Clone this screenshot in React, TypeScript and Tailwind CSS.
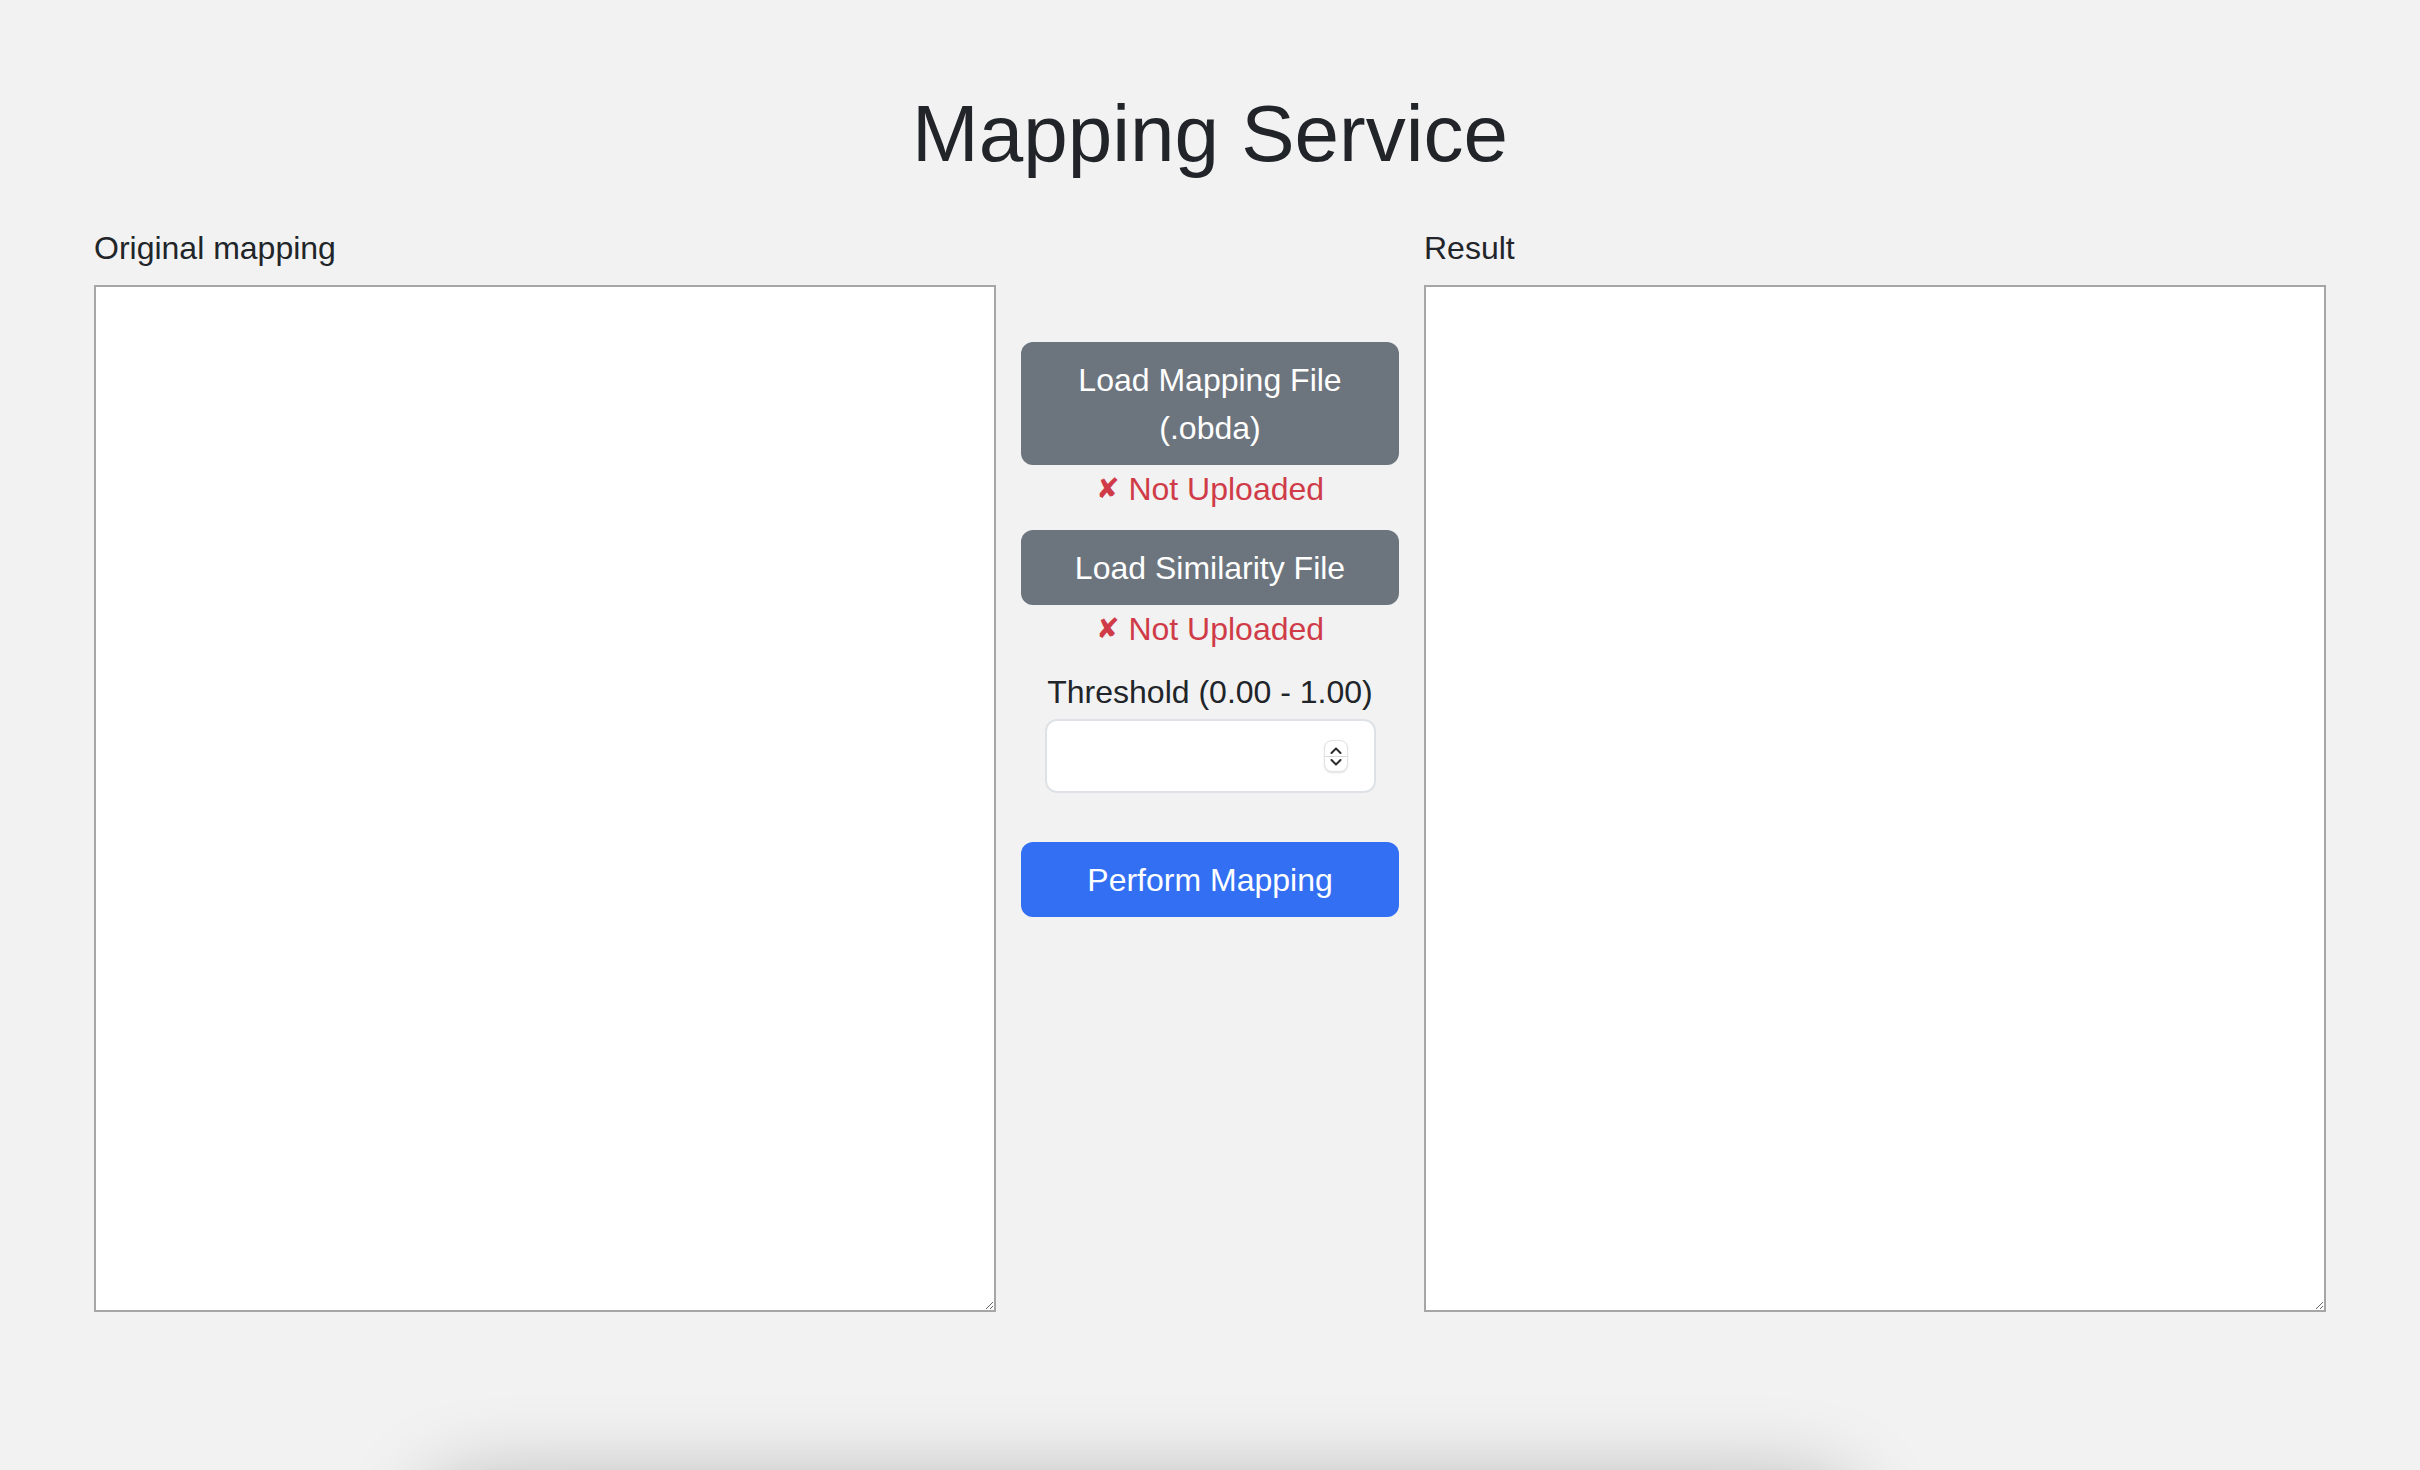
import { useState } from "react";

function Spinner() {
  return (
    <div className="pointer-events-none absolute right-[28px] top-[21px] flex h-[32px] w-[24px] flex-col items-center justify-center rounded-[8px] border border-[#e3e3e3] bg-white shadow-[0_1px_2px_rgba(0,0,0,0.12)]">
      <svg width="14" height="9" viewBox="0 0 14 9" fill="none">
        <path d="M2.5 7L7 2.5L11.5 7" stroke="#2b2b2b" strokeWidth="2" strokeLinecap="round" strokeLinejoin="round" />
      </svg>
      <div className="my-[1px] h-px w-full bg-[#d8d8d8]" />
      <svg width="14" height="9" viewBox="0 0 14 9" fill="none">
        <path d="M2.5 2L7 6.5L11.5 2" stroke="#2b2b2b" strokeWidth="2" strokeLinecap="round" strokeLinejoin="round" />
      </svg>
    </div>
  );
}

function Status() {
  return (
    <div className="flex h-[48px] items-center justify-center gap-[9px] text-[32px] leading-none text-[#d03b48]">
      <span className="font-['DejaVu_Sans',sans-serif] text-[28px] leading-none">✘</span>
      <span>Not Uploaded</span>
    </div>
  );
}

export default function App() {
  const [threshold, setThreshold] = useState("");

  return (
    <div className="h-[1470px] overflow-hidden bg-[#f2f2f2] font-['Liberation_Sans',Arial,sans-serif] text-[#212529]">
      <h1 className="pt-[86px] text-center text-[80px] font-normal leading-[1.2]">
        Mapping Service
      </h1>

      <div className="mt-[42px] flex px-[94px]">
        <div className="flex w-[902px] flex-col">
          <label className="text-[32px] leading-[48px]">Original mapping</label>
          <textarea className="mt-[13px] h-[1027px] w-full border-2 border-[#a6a6a6] bg-white outline-none" />
        </div>

        <div className="flex flex-1 flex-col items-center px-[25px] pt-[118px]">
          <button className="flex h-[123px] w-full items-center justify-center rounded-[12px] bg-[#6c757e] px-[24px] text-[32px] leading-[48px] text-white">
            Load Mapping File (.obda)
          </button>
          <Status />
          <button className="mt-[17px] flex h-[75px] w-full items-center justify-center rounded-[12px] bg-[#6c757e] px-[24px] text-[32px] leading-[48px] text-white">
            Load Similarity File
          </button>
          <Status />

          <label className="mt-[15px] h-[48px] text-center text-[32px] leading-[48px]">
            Threshold (0.00 - 1.00)
          </label>
          <div className="relative mt-[3px] w-[331px]">
            <input
              type="text"
              value={threshold}
              onChange={(e) => setThreshold(e.target.value)}
              className="h-[74px] w-full rounded-[12px] border-2 border-[#dee2e6] bg-white px-[24px] text-[32px] outline-none"
            />
            <Spinner />
          </div>

          <button className="mt-[49px] flex h-[75px] w-full items-center justify-center rounded-[12px] bg-[#326ff3] px-[24px] text-[32px] leading-[48px] text-white">
            Perform Mapping
          </button>
        </div>

        <div className="flex w-[902px] flex-col">
          <label className="text-[32px] leading-[48px]">Result</label>
          <textarea readOnly className="mt-[13px] h-[1027px] w-full border-2 border-[#a6a6a6] bg-white outline-none" />
        </div>
      </div>

      <div className="ml-[430px] mt-[178px] h-[200px] w-[1420px] rounded-[40px] bg-[#f2f2f2] shadow-[0_0_90px_rgba(0,0,0,0.32)]" />
    </div>
  );
}
